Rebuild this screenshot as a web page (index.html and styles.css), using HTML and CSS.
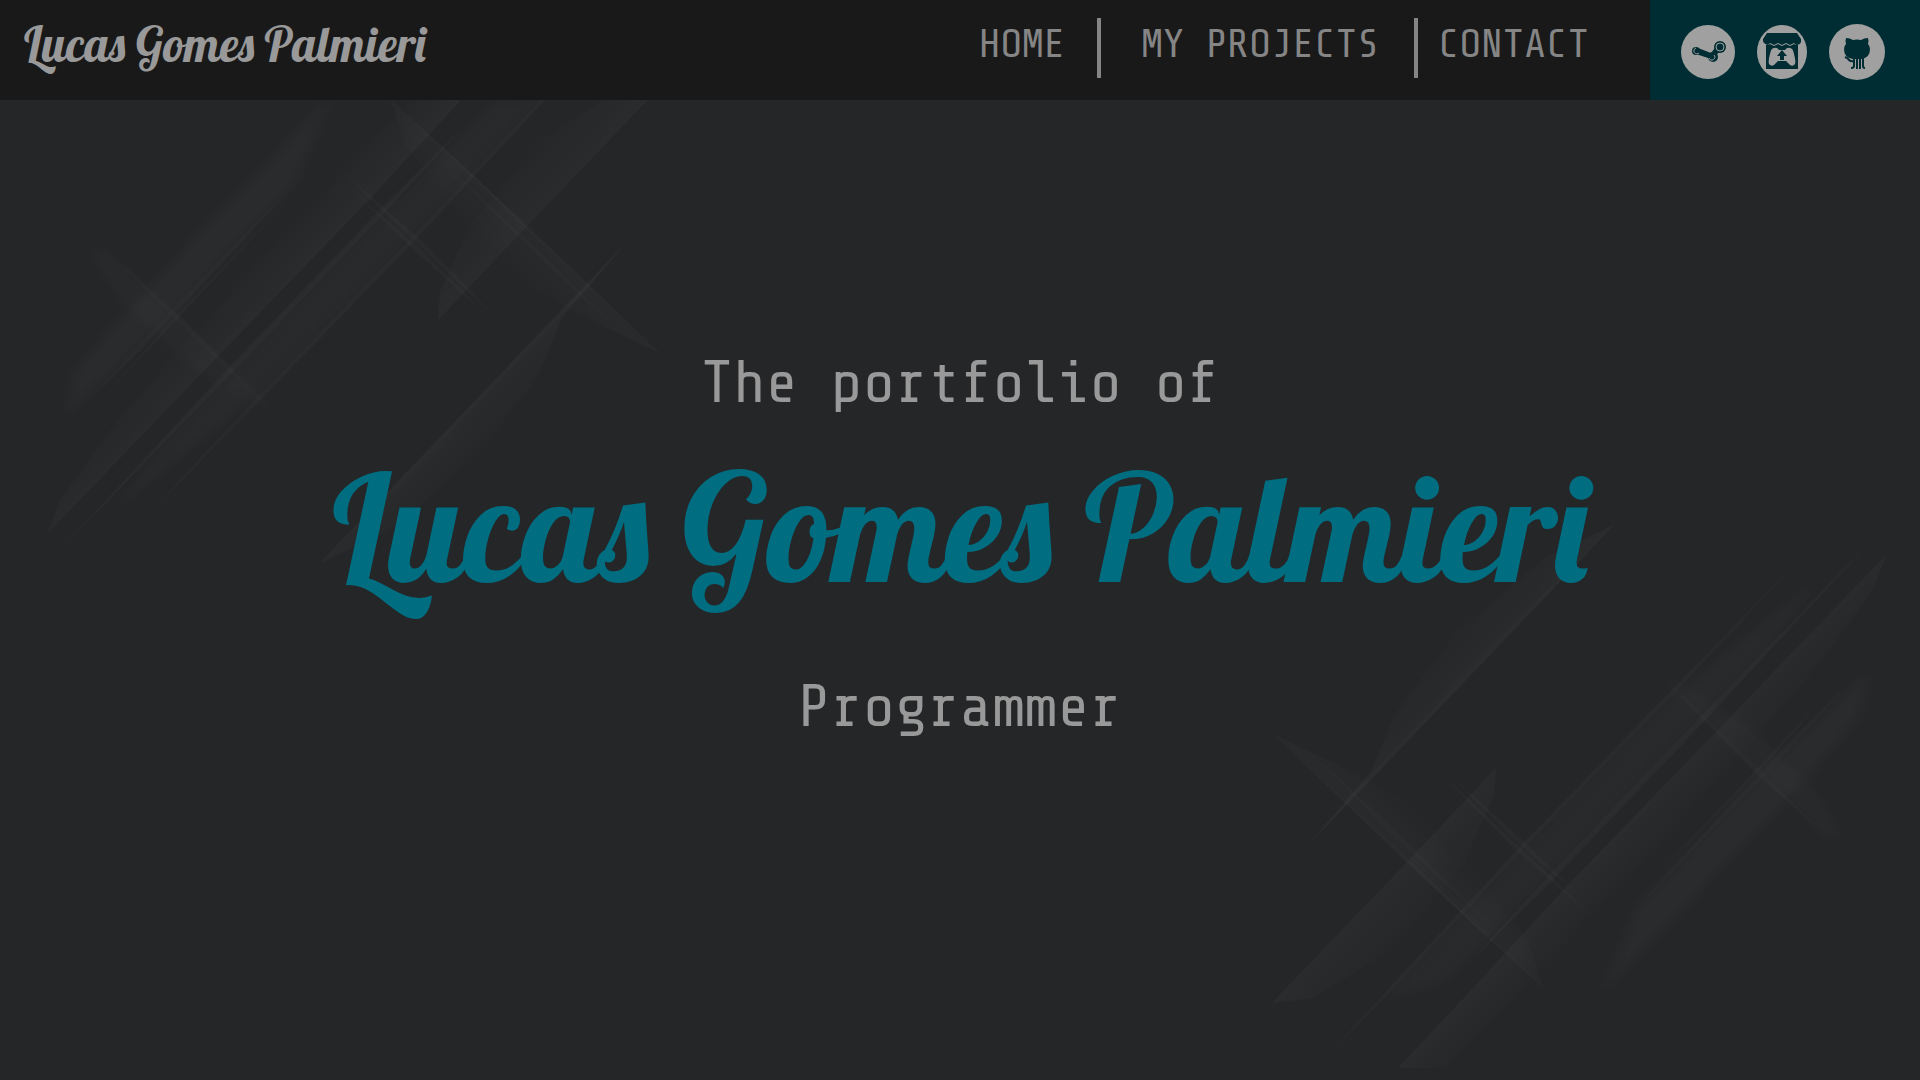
FILE: index.html
```html
<!DOCTYPE html>
<html lang="en">
<head>
<meta charset="utf-8">
<title>Lucas Gomes Palmieri</title>
<link rel="stylesheet" href="styles.css">
</head>
<body>
<div class="page">
  <svg class="backdrop" viewBox="0 0 1920 1080" preserveAspectRatio="xMidYMid slice" aria-hidden="true">
    <defs>
      <filter id="soft" x="-20%" y="-20%" width="140%" height="140%"><feGaussianBlur stdDeviation="5"/></filter>
      <linearGradient id="edgeC" gradientUnits="userSpaceOnUse" x1="172" y1="345" x2="202" y2="373"><stop offset="0" stop-color="#fff" stop-opacity="0"/><stop offset="1" stop-color="#fff" stop-opacity=".026"/></linearGradient>
      <linearGradient id="edgeE" gradientUnits="userSpaceOnUse" x1="480" y1="191" x2="522" y2="231"><stop offset="0" stop-color="#fff" stop-opacity="0"/><stop offset="1" stop-color="#fff" stop-opacity=".026"/></linearGradient>
      <linearGradient id="edgeF" gradientUnits="userSpaceOnUse" x1="460" y1="416" x2="494" y2="448"><stop offset="0" stop-color="#fff" stop-opacity=".026"/><stop offset="1" stop-color="#fff" stop-opacity="0"/></linearGradient>
      <linearGradient id="edgeG" gradientUnits="userSpaceOnUse" x1="528" y1="228" x2="496" y2="260"><stop offset="0" stop-color="#fff" stop-opacity=".02"/><stop offset="1" stop-color="#fff" stop-opacity="0"/></linearGradient>
      <g id="strokes" fill="#fff">
        <g filter="url(#soft)">
          <path d="M330 98 147 289 76 370 66 415 175 310 295 182Z" fill-opacity=".024"/>
          <path d="M548 90 410 236 258 393 150 480 120 505 170 440 235 372 385 216 490 108Z" fill-opacity=".02"/>
          <path d="M101 248 180 322 270 408 240 395 190 363 125 305 95 256Z" fill-opacity=".014"/>
        </g>
        <path d="M307 170 173 317 69 422 165 316Z" fill-opacity=".016"/>
        <path d="M536 20 461 100 366 203 221 353 48 533 60 500 110 430 190 335 310 205 410 100 490 20Z" fill="url(#edgeC)"/>
        <path d="M618 20 541 99 410 239 258 396 133 530 261 400 413 243 544 101Z" fill-opacity=".02"/>
        <path d="M468 122 381 208 231 365 46 565 235 370 385 213Z" fill-opacity=".022"/>
        <path d="M662 85 526 227 438 320 440 292 470 225 540 140 620 90Z" fill="url(#edgeE)"/>
        <path d="M627 242 581 290 393 487 320 563 390 530 480 455 540 373 562 318Z" fill="url(#edgeF)"/>
        <path d="M627 242 581 288 393 485 320 563 396 489 584 292Z" fill-opacity=".012"/>
        <path d="M391 100 471 173 528 228 660 353 600 325 520 282 450 205 405 145Z" fill="url(#edgeG)"/>
        <path d="M391 100 530 227 662 355 527 230Z" fill-opacity=".014"/>
        <path d="M430 150 550 261 635 347 547 265Z" fill-opacity=".014"/>
        <path d="M337 167 421 240 501 322 417 244ZM352 190 421 249 484 313 417 253Z" fill-opacity=".018"/>
        <path d="M299 190 101 400 175 316Z" fill-opacity=".018"/>
        <path d="M101 245 183 319 286 425 178 323Z" fill-opacity=".014"/>
      </g>
    </defs>
    <use href="#strokes"/>
    <use href="#strokes" transform="rotate(180 967 544)"/>
  </svg>

  <header class="header">
    <a class="brand" href="#home">Lucas Gomes Palmieri</a>
    <nav class="nav">
      <a class="nav-link nav-home" href="#home">HOME</a>
      <a class="nav-link nav-projects" href="#projects">MY PROJECTS</a>
      <a class="nav-link nav-contact" href="#contact">CONTACT</a>
    </nav>
    <div class="social">
      <a href="#steam" aria-label="Steam">
        <svg width="54" height="54" viewBox="0 0 54 54"><circle class="disc" cx="27" cy="27" r="27"/><g class="mark"><circle cx="39" cy="22" r="6"/><circle cx="15" cy="26" r="4"/><circle cx="32" cy="32" r="5"/><path d="M17 23 30 28 34 23 38 27 33 33 27 33 15 29Z"/></g><circle class="ring" cx="39" cy="22" r="4"/><path class="ring" d="M15 23a3 3 0 1 0 3 5M28 33a3 3 0 1 0 5-3"/></svg>
      </a>
      <a href="#itch" aria-label="itch.io">
        <svg width="50" height="54" viewBox="0 0 50 54"><ellipse class="disc" cx="25" cy="27" rx="25" ry="27"/><path class="mark" d="M10 8H40L44 14V17Q43 20 39 20L37 18 33 20 29 18 25 20 21 18 17 20 13 18 11 20Q7 19 6 16V14Z"/><path class="mark" d="M9 20H11L13 19 17 21 21 19 25 21 29 19 33 21 37 19 39 20H41V44H9Z"/><path class="disc" d="M17 23Q14 23 13 29 11 36 12 39 14 42 17 40L21 36H29L33 40Q36 42 38 39 39 36 37 29 36 23 33 23 30 22 28 25H22Q20 22 17 23Z"/><path class="mark" d="M25 25 30 31H27V35H23V31H20Z"/></svg>
      </a>
      <a href="#github" aria-label="GitHub">
        <svg width="56" height="56" viewBox="0 0 56 56"><circle class="disc" cx="28" cy="28" r="28"/><path class="mark" d="M17 14Q21 14 24 16 28 15 32 16 35 14 39 14 40 17 39 20 41 22 41 25 41 34 32 35H24Q15 34 15 25 15 22 17 20 16 17 17 14Z"/><path class="leg" d="M16 33Q19 34 20 36 22 38 25 37M25 34V42Q25 44 22 44M28 34V45M31 34V45M34 34V42Q34 44 36 44"/></svg>
      </a>
    </div>
  </header>

  <main class="hero">
    <p class="caption">The portfolio of</p>
    <h1 class="title">Lucas Gomes Palmieri</h1>
    <p class="caption">Programmer</p>
  </main>
</div>
</body>
</html>
```
FILE: styles.css
```css
* { box-sizing: border-box; }
body { margin: 0; background: #242628; }
.page { position: relative; min-height: 100vh; display: flex; flex-direction: column; }
.backdrop { position: absolute; inset: 0; width: 100%; height: 100%; }
.header { position: relative; display: flex; height: 100px; background: #191919; }
a { color: inherit; text-decoration: none; }
.brand {
  padding: 14px 24px;
  font: 48px/60px Lobster, "Liberation Serif", serif;
  color: #999;
  white-space: nowrap;
}
.nav {
  display: flex;
  margin-left: auto;
  padding: 18px 61px 22px 0;
  font: 40px/54px "Share Tech Mono", "DejaVu Sans Mono", monospace;
  color: #858585;
  white-space: nowrap;
}
.nav-home { padding-right: 32px; }
.nav-projects { padding: 0 35px 0 40px; border: solid #858585; border-width: 0 4px; }
.nav-contact { padding-left: 20px; }
.social { display: flex; justify-content: center; align-items: center; gap: 22px; width: 270px; padding: 4px 4px 0 0; background: #002d33; }
.social svg { display: block; }
.disc { fill: #a0a0a0; }
.mark { fill: #002d33; }
.ring { fill: none; stroke: #a0a0a0; stroke-width: 1px; }
.leg { fill: none; stroke: #002d33; stroke-width: 2px; }
.hero { position: relative; flex: 1; display: flex; flex-direction: column; align-items: center; justify-content: center; padding-bottom: 90px; text-align: center; }
.caption { margin: 0; font: 60px/64px "Share Tech Mono", "DejaVu Sans Mono", monospace; color: #999; }
.title { margin: 21px 0 59px; font: 150px/180px Lobster, "Liberation Serif", serif; color: #006d80; white-space: nowrap; }
```
